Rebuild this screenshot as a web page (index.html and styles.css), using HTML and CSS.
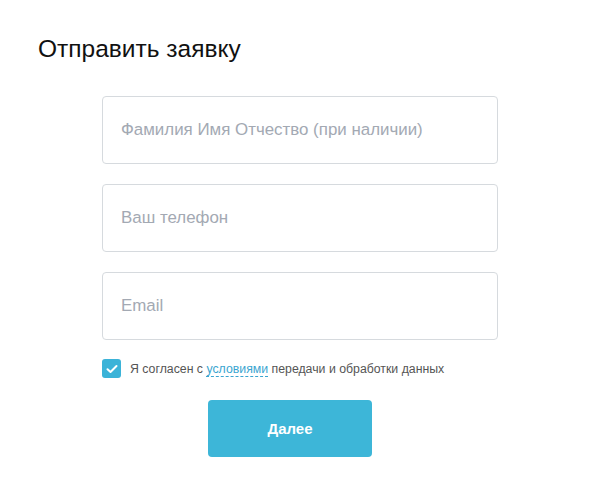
FILE: index.html
```html
<!DOCTYPE html>
<html lang="ru">
<head>
<meta charset="utf-8">
<title>Отправить заявку</title>
<link rel="stylesheet" href="styles.css">
</head>
<body>
<div class="page">
  <h1 class="title">Отправить заявку</h1>
  <form class="form">
    <div class="field"><input type="text" placeholder="Фамилия Имя Отчество (при наличии)"></div>
    <div class="field"><input type="tel" placeholder="Ваш телефон"></div>
    <div class="field"><input type="email" placeholder="Email"></div>
    <label class="agree">
      <span class="check">
        <svg width="12" height="10" viewBox="0 0 12 10"><path d="M1.5 5.2 L4.5 8 L10.5 2" fill="none" stroke="#fff" stroke-width="2" stroke-linecap="round" stroke-linejoin="round"/></svg>
      </span>
      <span class="agree-text">Я согласен с <a class="link" href="#">условиями</a> передачи и обработки данных</span>
    </label>
    <div class="actions"><button type="button" class="btn">Далее</button></div>
  </form>
</div>
</body>
</html>
```
FILE: styles.css
```css
* { box-sizing: border-box; }
html, body { margin: 0; padding: 0; background: #fff; }
body { font-family: "Liberation Sans", Arial, sans-serif; color: #111; }
.page { padding: 35px 0 0 38px; }
.title {
  margin: 0;
  font-size: 24.5px;
  line-height: 28px;
  font-weight: 400;
  color: #111;
}
.form {
  margin: 33px 0 0 64px;
  width: 396px;
  display: flex;
  flex-direction: column;
}
.field { margin-bottom: 20px; }
.field input {
  display: block;
  width: 100%;
  height: 68px;
  border: 1px solid #d6dade;
  border-radius: 4px;
  padding: 0 18px;
  font-family: "Liberation Sans", Arial, sans-serif;
  font-size: 16.9px;
  color: #333;
  outline: none;
}
.field input::placeholder { color: #a3a9b3; }
.agree {
  display: flex;
  align-items: center;
  gap: 9px;
  margin-top: -1px;
  font-size: 12.3px;
  color: #555;
}
.check {
  width: 19px;
  height: 19px;
  border-radius: 3px;
  background: #3bb3d8;
  display: flex;
  align-items: center;
  justify-content: center;
}
.agree-text { line-height: 18px; }
.link {
  color: #3aa5d0;
  text-decoration: none;
  border-bottom: 1px dashed #3aa5d0;
}
.actions {
  display: flex;
  justify-content: center;
  margin-top: 22px;
  padding-right: 20px;
}
.btn {
  width: 164px;
  height: 57px;
  border: 0;
  border-radius: 4px;
  background: #3db6d8;
  color: #fff;
  font-family: "Liberation Sans", Arial, sans-serif;
  font-size: 15px;
  font-weight: 700;
  cursor: pointer;
}
```
